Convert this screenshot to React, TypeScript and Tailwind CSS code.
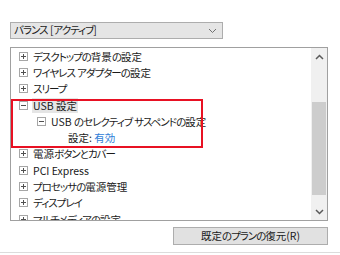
import React from 'react';

// kana in Meiryo UI are narrow; tighten kana runs only
function jp(s: string) {
  return s.split(/([\u3041-\u30ff]+)/).map((p, i) =>
    /[\u3041-\u30ff]/.test(p) ? (
      <span key={i} className="tracking-[-1px]">
        {p}
      </span>
    ) : (
      p
    ),
  );
}

type Row = { level: number; icon: 'plus' | 'minus' | null; text: React.ReactNode; selected?: boolean };

const ROWS: Row[] = [
  { level: 0, icon: 'plus', text: jp('デスクトップの背景の設定') },
  { level: 0, icon: 'plus', text: jp('ワイヤレス アダプターの設定') },
  { level: 0, icon: 'plus', text: jp('スリープ') },
  { level: 0, icon: 'minus', text: 'USB 設定', selected: true },
  { level: 1, icon: 'minus', text: jp('USB のセレクティブ サスペンドの設定') },
  {
    level: 2,
    icon: null,
    text: (
      <>
        設定: <span className="text-[#2f80d8]">有効</span>
      </>
    ),
  },
  { level: 0, icon: 'plus', text: jp('電源ボタンとカバー') },
  { level: 0, icon: 'plus', text: 'PCI Express' },
  { level: 0, icon: 'plus', text: jp('プロセッサの電源管理') },
  { level: 0, icon: 'plus', text: jp('ディスプレイ') },
  { level: 0, icon: 'plus', text: jp('マルチメディアの設定') },
];

function Toggle({ kind }: { kind: 'plus' | 'minus' }) {
  return (
    <svg width="9" height="9" viewBox="0 0 9 9" className="shrink-0">
      <rect x="0.5" y="0.5" width="8" height="8" fill="#fff" stroke="#a6a6a6" />
      <line x1="2" y1="4.5" x2="7" y2="4.5" stroke="#505050" />
      {kind === 'plus' && <line x1="4.5" y1="2" x2="4.5" y2="7" stroke="#505050" />}
    </svg>
  );
}

function Chevron({ up }: { up?: boolean }) {
  return (
    <svg width="9" height="6" viewBox="0 0 9 6">
      <path d={up ? 'M1 5 L4.5 1.5 L8 5' : 'M1 1 L4.5 4.5 L8 1'} fill="none" stroke="#5a5a5a" strokeWidth="1.5" />
    </svg>
  );
}

export default function App() {
  return (
    <div className="w-[340px] h-[255px] bg-white overflow-hidden text-[10.5px] text-[#1a1a1a] font-['Noto_Sans_CJK_JP',sans-serif] [font-feature-settings:'palt']">
      <div className="pt-[22px] pl-[10px] pr-[12px]">
        <div className="w-[213px] h-[17px] bg-[#e5e5e5] border border-[#adadad] flex items-center justify-between pl-[3px] pr-[5px]">
          <span className="leading-none">{jp('バランス [アクティブ]')}</span>
          <svg width="9" height="6" viewBox="0 0 9 6">
            <path d="M1 1 L4.5 4.5 L8 1" fill="none" stroke="#707070" strokeWidth="1" />
          </svg>
        </div>

        <div className="relative mt-[8px] h-[174px] border border-[#a0a0a0] flex">
          <div className="flex-1 overflow-hidden">
            {ROWS.map((r, i) => (
              <div
                key={i}
                className="h-[16.3px] flex items-center gap-[5px]"
                style={{ paddingLeft: r.level === 0 ? 8 : r.level === 1 ? 26 : 57 }}
              >
                {r.icon && <Toggle kind={r.icon} />}
                <span className={`leading-[15px] whitespace-nowrap ${r.selected ? 'bg-[#e5e5e5] px-[1px] -ml-[1px]' : ''}`}>
                  {r.text}
                </span>
              </div>
            ))}
          </div>
          <div className="w-[16px] bg-[#f0f0f0] flex flex-col">
            <div className="h-[17px] flex items-center justify-center">
              <Chevron up />
            </div>
            <div className="flex-1">
              <div className="mt-[37px] mx-[1px] h-[93px] bg-[#cdcdcd]" />
            </div>
            <div className="h-[17px] flex items-center justify-center">
              <Chevron />
            </div>
          </div>
          <div className="absolute left-[0px] top-[51px] w-[192px] h-[49px] border-2 border-[#e81123]" />
        </div>

        <div className="flex justify-end mt-[6px]">
          <button className="w-[155px] h-[18px] bg-[#e1e1e1] border border-[#adadad] flex items-center justify-center leading-none">
            {jp('既定のプランの復元(R)')}
          </button>
        </div>
      </div>
      <div className="mt-[7px] border-t border-[#dcdcdc]" />
    </div>
  );
}
